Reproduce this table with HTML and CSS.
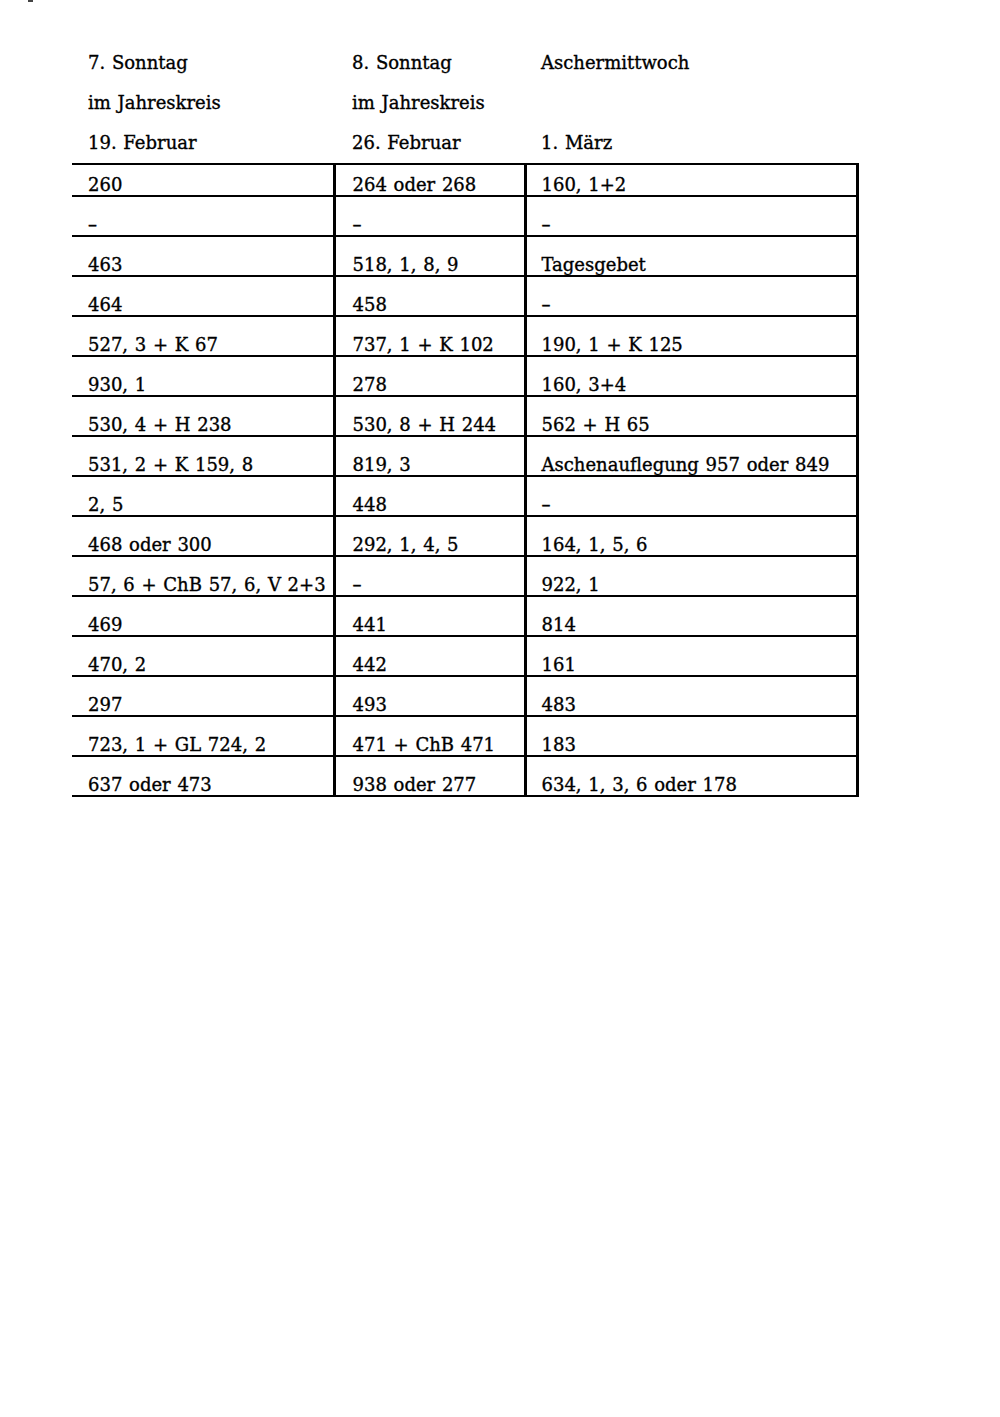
FILE: index.html
```html
<!DOCTYPE html>
<html lang="de">
<head>
<meta charset="utf-8">
<title>Liedplan</title>
<link rel="stylesheet" href="styles.css">
</head>
<body>
<div class="speck"></div>
<table class="plan">
  <colgroup>
    <col class="c1"><col class="c2"><col class="c3">
  </colgroup>
  <thead>
    <tr><th>7. Sonntag</th><th>8. Sonntag</th><th>Aschermittwoch</th></tr>
    <tr><th>im Jahreskreis</th><th>im Jahreskreis</th><th></th></tr>
    <tr><th>19. Februar</th><th>26. Februar</th><th>1. März</th></tr>
  </thead>
  <tbody>
    <tr class="first"><td>260</td><td>264 oder 268</td><td>160, 1+2</td></tr>
    <tr><td>–</td><td>–</td><td>–</td></tr>
    <tr><td>463</td><td>518, 1, 8, 9</td><td>Tagesgebet</td></tr>
    <tr><td>464</td><td>458</td><td>–</td></tr>
    <tr><td>527, 3 + K 67</td><td>737, 1 + K 102</td><td>190, 1 + K 125</td></tr>
    <tr><td>930, 1</td><td>278</td><td>160, 3+4</td></tr>
    <tr><td>530, 4 + H 238</td><td>530, 8 + H 244</td><td>562 + H 65</td></tr>
    <tr><td>531, 2 + K 159, 8</td><td>819, 3</td><td>Aschenauflegung 957 oder 849</td></tr>
    <tr><td>2, 5</td><td>448</td><td>–</td></tr>
    <tr><td>468 oder 300</td><td>292, 1, 4, 5</td><td>164, 1, 5, 6</td></tr>
    <tr><td>57, 6 + ChB 57, 6, V 2+3</td><td>–</td><td>922, 1</td></tr>
    <tr><td>469</td><td>441</td><td>814</td></tr>
    <tr><td>470, 2</td><td>442</td><td>161</td></tr>
    <tr><td>297</td><td>493</td><td>483</td></tr>
    <tr><td>723, 1 + GL 724, 2</td><td>471 + ChB 471</td><td>183</td></tr>
    <tr><td>637 oder 473</td><td>938 oder 277</td><td>634, 1, 3, 6 oder 178</td></tr>
  </tbody>
</table>
</body>
</html>
```
FILE: styles.css
```css
html, body {
  margin: 0;
  padding: 0;
  background: #ffffff;
}

body {
  font-family: "DejaVu Serif", "Liberation Serif", serif;
  font-size: 18px;
  color: #000000;
  width: 1000px;
  min-height: 1417px;
  -webkit-text-stroke: 0.35px #000;
}

.speck {
  width: 5px;
  height: 2px;
  margin-left: 28px;
  background: #444444;
}

.plan {
  margin-left: 72px;
  margin-top: 41px;
  border-collapse: collapse;
  table-layout: fixed;
  width: 785px;
}

.c1 { width: 262px; }
.c2 { width: 191px; }
.c3 { width: 332px; }

.plan th {
  font-weight: normal;
  text-align: left;
  height: 40px;
  padding: 0 0 0 16px;
  vertical-align: middle;
  line-height: 20px;
  white-space: nowrap;
  word-spacing: 1px;
}

.plan th:nth-child(2) { padding-left: 18px; }
.plan th:nth-child(3) { padding-left: 16px; }

.plan tbody td {
  height: 38px;
  padding: 0 0 0 16px;
  vertical-align: bottom;
  line-height: 20px;
  white-space: nowrap;
  word-spacing: 1px;
  border-top: 2px solid #000;
  border-bottom: 2px solid #000;
  border-left: 3px solid #000;
  border-right: 3px solid #000;
}

.plan tbody td:first-child { border-left: none; }
.plan tbody td:nth-child(2) { padding-left: 17px; }
.plan tbody td:nth-child(3) { padding-left: 15px; }

.plan tbody tr.first td { height: 30px; }
```
